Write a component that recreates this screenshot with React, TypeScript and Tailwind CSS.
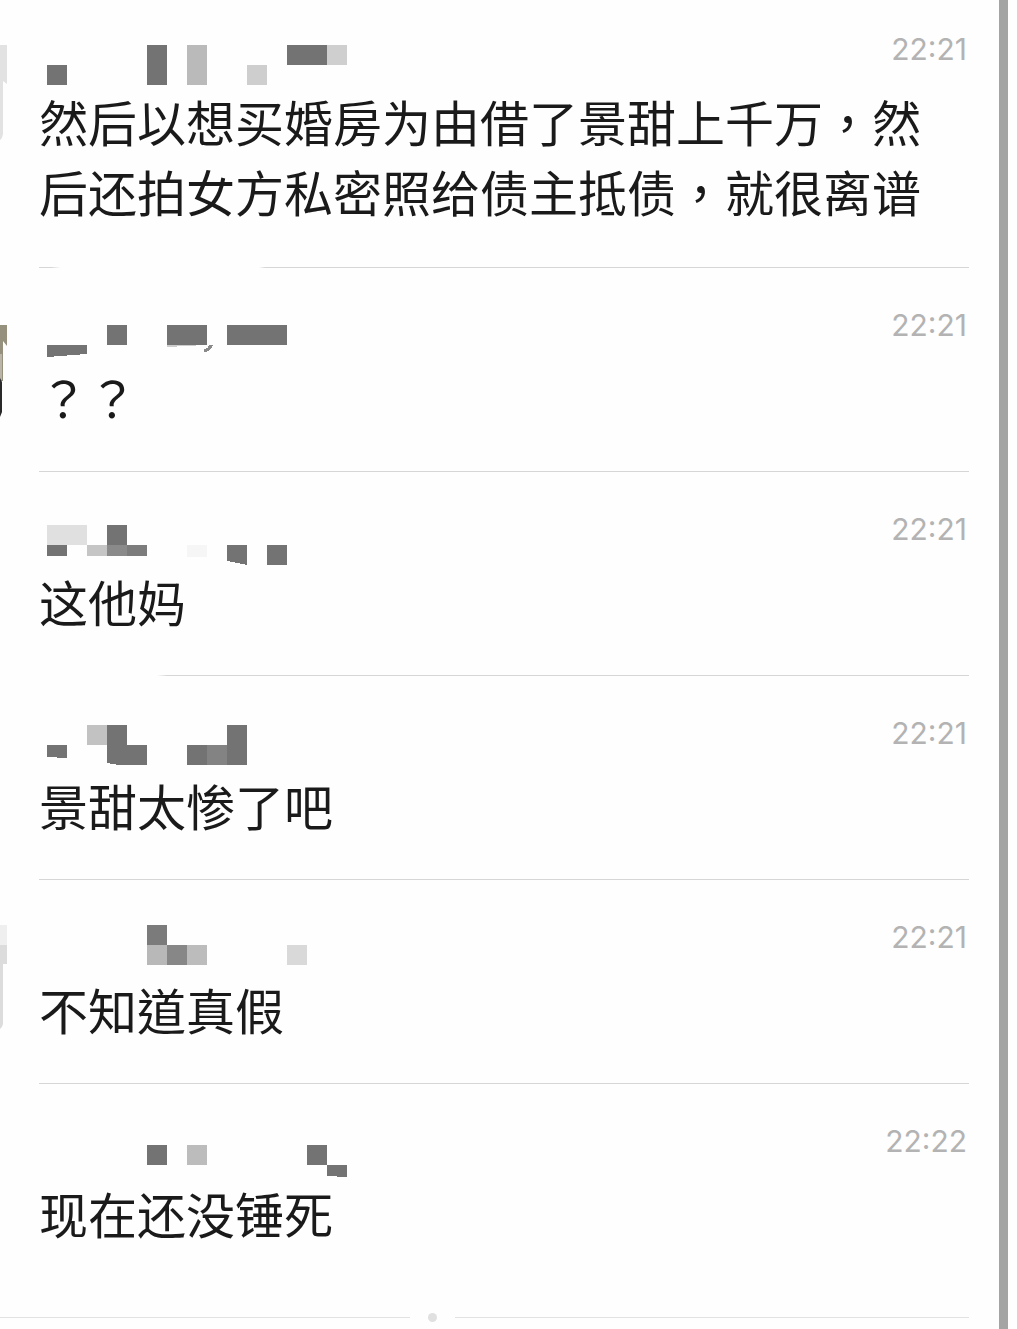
import { clsx } from "clsx";

type Block = {
  x: number;
  y: number;
  w: number;
  h?: number;
  fill?: string;
};

type Message = {
  time: string;
  text: string;
  blocks: Block[];
  shapes?: { d: string; fill: string }[];
  avatar?: { d: string; fill: string }[];
  divider?: string;
  tall?: boolean;
};

const DARK = "#737373";

// names are censored, the blocks sit on a 20px mosaic grid
const messages: Message[] = [
  {
    time: "22:21",
    text: "然后以想买婚房为由借了景甜上千万，然后还拍女方私密照给债主抵债，就很离谱",
    blocks: [
      { x: 8, y: 73, w: 20 },
      { x: 108, y: 53, w: 20, h: 40 },
      { x: 148, y: 53, w: 20, h: 40, fill: "#bababa" },
      { x: 208, y: 73, w: 20, fill: "#cecece" },
      { x: 248, y: 53, w: 40 },
      { x: 288, y: 53, w: 20, fill: "#cfcfcf" },
    ],
    avatar: [
      { d: "M0 53H7V92L3 89V142Q2 147 0 148Z", fill: "#e2e2e2" },
    ],
    divider:
      "bg-[linear-gradient(to_right,#d6d6d6_12px,transparent_22px,transparent_220px,#d6d6d6_226px)]",
    tall: true,
  },
  {
    time: "22:21",
    text: "？？",
    blocks: [
      { x: 68, y: 57, w: 20 },
      { x: 128, y: 57, w: 40 },
      { x: 188, y: 57, w: 60 },
    ],
    shapes: [
      { d: "M8 77H48V86L8 89Z", fill: DARK },
      { d: "M128 77H166L128 79Z", fill: "#cccccc" },
      { d: "M170 77H174Q172 84 165 84V81Q169 81 170 77Z", fill: "#8a8a8a" },
    ],
    avatar: [
      { d: "M0 57H7V78L3 73V113H0Z", fill: "#96917d" },
      { d: "M0 86H2V112H0Z", fill: "#bbb5a8" },
      { d: "M0 110L2 114V144L0 149Z", fill: "#29292a" },
    ],
  },
  {
    time: "22:21",
    text: "这他妈",
    blocks: [
      { x: 8, y: 53, w: 40, fill: "#e0e0e0" },
      { x: 68, y: 53, w: 20 },
      { x: 8, y: 73, w: 20, h: 11 },
      { x: 48, y: 73, w: 20, h: 11, fill: "#c5c5c5" },
      { x: 68, y: 73, w: 20, h: 11, fill: "#8a8a8a" },
      { x: 88, y: 73, w: 20, h: 11, fill: "#7c7c7c" },
      { x: 148, y: 73, w: 20, h: 12, fill: "#f6f6f6" },
      { x: 228, y: 73, w: 20 },
    ],
    shapes: [{ d: "M188 73H208V93L188 89Z", fill: DARK }],
    divider:
      "bg-[linear-gradient(to_right,transparent_118px,#d6d6d6_128px)]",
  },
  {
    time: "22:21",
    text: "景甜太惨了吧",
    blocks: [
      { x: 48, y: 49, w: 20, fill: "#c2c2c2" },
      { x: 148, y: 69, w: 20 },
      { x: 168, y: 69, w: 20, fill: "#838383" },
      { x: 188, y: 49, w: 20, h: 40 },
    ],
    shapes: [
      { d: "M8 69H28V82L8 81Z", fill: DARK },
      { d: "M68 49H88V69H108V89H80L68 87Z", fill: DARK },
    ],
  },
  {
    time: "22:21",
    text: "不知道真假",
    blocks: [
      { x: 108, y: 45, w: 20, fill: "#7b7b7b" },
      { x: 108, y: 65, w: 20, fill: "#b8b8b8" },
      { x: 128, y: 65, w: 20, fill: "#878787" },
      { x: 148, y: 65, w: 20, fill: "#bcbcbc" },
      { x: 248, y: 65, w: 20, fill: "#d9d9d9" },
    ],
    avatar: [
      { d: "M0 45H7V65H0Z", fill: "#efefef" },
      { d: "M0 65H7V84H3V144Q2 148 0 149Z", fill: "#dcdcdc" },
    ],
  },
  {
    time: "22:22",
    text: "现在还没锤死",
    blocks: [
      { x: 108, y: 61, w: 20 },
      { x: 148, y: 61, w: 20, fill: "#bcbcbc" },
      { x: 268, y: 61, w: 20 },
    ],
    shapes: [{ d: "M288 81H308V93L288 92Z", fill: DARK }],
    divider: "bg-transparent",
  },
];

const Avatar = ({ shapes = [] }: { shapes?: Message["avatar"] }) => (
  <svg className="h-[150px] w-[39px] shrink-0" viewBox="0 0 39 150" aria-hidden>
    {shapes.map((s) => (
      <path key={s.d} d={s.d} fill={s.fill} />
    ))}
  </svg>
);

const HiddenName = ({ blocks, shapes = [] }: Pick<Message, "blocks" | "shapes">) => (
  <svg
    className="h-[94px] w-[320px] shrink-0"
    viewBox="0 0 320 94"
    shapeRendering="crispEdges"
    aria-hidden
  >
    {blocks.map((b) => (
      <rect
        key={`${b.x}-${b.y}`}
        x={b.x}
        y={b.y}
        width={b.w}
        height={b.h ?? 20}
        fill={b.fill ?? DARK}
      />
    ))}
    {shapes.map((s) => (
      <path key={s.d} d={s.d} fill={s.fill} />
    ))}
  </svg>
);

const MessageRow = ({ message }: { message: Message }) => (
  <li className="flex">
    <Avatar shapes={message.avatar} />
    <div className="min-w-0 flex-1">
      <div className="flex items-start justify-between">
        <HiddenName blocks={message.blocks} shapes={message.shapes} />
        <time className="pt-[39px] pr-0.5 font-[Inter,sans-serif] text-[30px] leading-9 text-[#b3b3b3]">
          {message.time}
        </time>
      </div>
      <p
        className={clsx(
          "pr-6 font-['Noto_Sans_CJK_TC',sans-serif] text-[49px] leading-[70px] text-[#1a1a1a]",
          message.tall ? "pb-[41px]" : "pb-[39px]",
        )}
      >
        {message.text}
      </p>
      <div className={clsx("h-px", message.divider ?? "bg-[#d6d6d6]")} />
    </div>
  </li>
);

export default function App() {
  return (
    <div className="flex min-h-screen overflow-hidden bg-[#fefefe] pr-[9px]">
      <main className="min-w-0 flex-1 pr-[30px]">
        <ul className="-mt-2">
          {messages.map((message, i) => (
            <MessageRow key={i} message={message} />
          ))}
        </ul>
        <div className="flex items-center pt-[25px]">
          <div className="h-px w-[410px] bg-[#e2e2e2]" />
          <div className="mx-[18px] size-[9px] rounded-full bg-[#e0e0e0]" />
          <div className="h-px flex-1 bg-[#e2e2e2]" />
        </div>
      </main>
      <div className="w-[9px] shrink-0 bg-[#a4a4a4]" />
    </div>
  );
}
